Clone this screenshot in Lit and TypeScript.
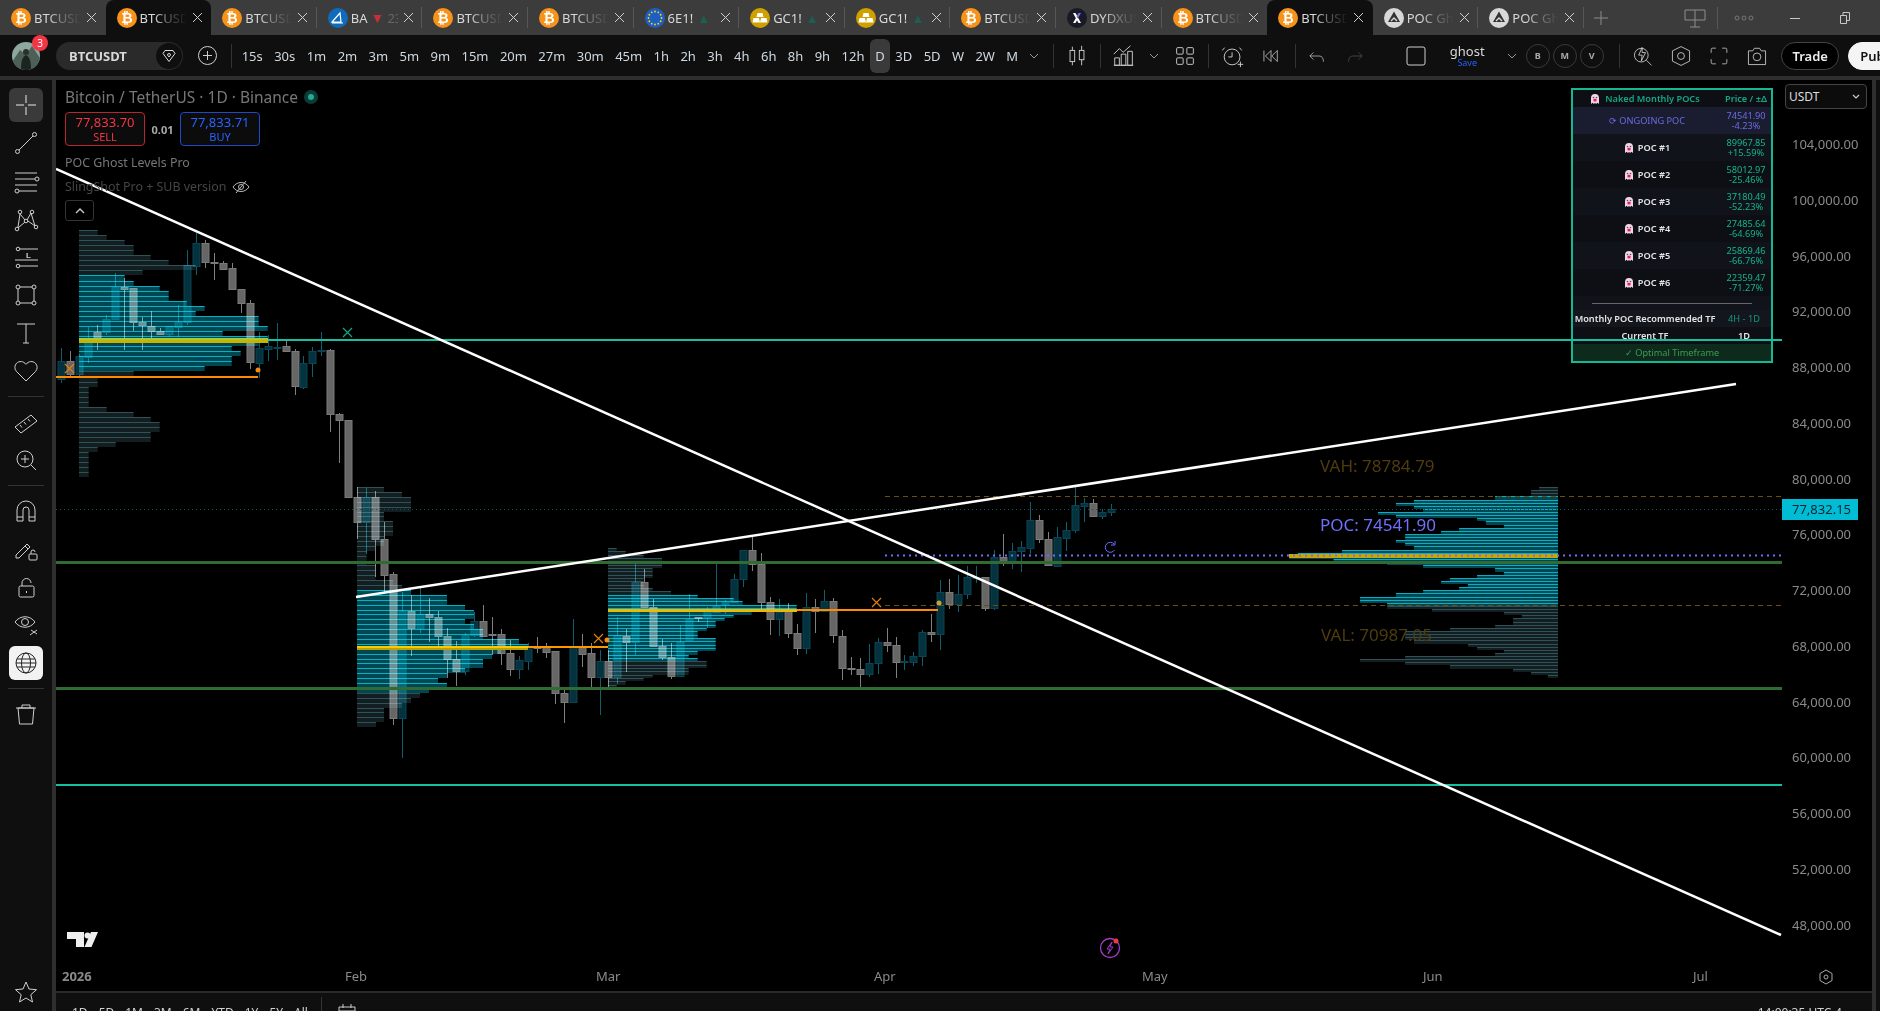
import { LitElement, html, svg, css } from 'lit'
import { customElement } from 'lit/decorators.js'

// body top, body bottom, wick top, wick bottom, up (1) / down (0)
const CANDLES: number[][] = [
  [361,379,348,383,1],[361,374,351,377,0],[356,374,354,376,1],[340,357,327,363,1],[332,341,325,350,0],
  [319,332,315,335,1],[287,319,273,320,1],[287,289,278,350,0],[288,322,288,331,0],[322,325,317,350,0],
  [326,331,311,343,0],[331,334,328,335,0],[326,334,326,337,1],[322,327,305,337,1],[265,322,250,325,1],
  [243,266,233,275,1],[243,262,240,268,0],[262,263,253,280,0],[263,269,261,270,0],[268,289,263,290,0],
  [289,303,289,313,0],[303,362,300,369,0],[348,363,332,378,1],[346,349,335,361,1],[347,348,323,360,1],
  [346,351,341,352,0],[351,386,349,395,0],[363,387,356,389,1],[351,363,347,377,1],[350,351,332,356,1],
  [350,414,349,432,0],[414,420,413,463,0],[420,497,420,497,0],[497,522,487,539,0],[497,522,488,554,1],
  [497,539,491,577,0],[539,575,522,592,0],[574,718,572,725,0],[611,718,592,758,1],[611,628,595,656,0],
  [614,628,588,633,1],[614,617,598,642,0],[617,636,611,648,0],[636,659,628,678,0],[659,671,641,686,0],
  [635,671,633,675,1],[621,635,612,637,1],[621,636,605,636,0],[634,635,617,655,0],[634,653,629,665,0],
  [653,669,640,676,0],[660,669,656,679,1],[647,661,643,670,1],[647,648,637,653,0],[647,652,643,658,0],
  [651,693,651,704,0],[693,702,688,723,0],[647,702,619,703,1],[647,654,634,667,0],[653,677,643,689,0],
  [661,677,650,715,1],[661,677,650,687,0],[635,677,617,684,1],[636,642,629,672,0],[582,642,562,655,1],
  [582,607,569,608,0],[607,646,599,646,0],[646,657,639,660,0],[657,676,643,679,0],[642,676,625,677,1],
  [619,640,594,640,1],[617,618,617,622,0],[611,617,607,628,1],[606,612,563,612,1],[602,604,600,614,1],
  [579,602,574,603,1],[550,579,550,587,1],[550,564,537,571,0],[564,602,553,609,0],[602,619,597,635,0],
  [612,619,599,636,1],[611,633,603,638,0],[633,648,624,655,0],[607,648,593,654,1],[607,611,599,633,0],
  [601,611,590,612,1],[601,635,598,643,0],[636,668,630,680,0],[668,669,657,675,0],[669,674,658,687,0],
  [663,674,644,677,1],[642,663,638,674,1],[642,645,628,652,0],[645,662,637,678,0],[661,662,655,670,1],
  [656,662,652,666,1],[632,656,630,666,1],[632,634,614,642,0],[592,634,580,650,1],[592,604,579,609,0],
  [594,604,575,612,1],[577,594,566,599,1],[577,578,566,583,1],[577,608,577,611,0],[557,608,550,610,1],
  [557,562,534,566,0],[551,561,543,569,1],[547,551,541,572,1],[520,548,502,554,1],[520,539,515,543,0],
  [539,565,532,566,0],[537,566,527,567,1],[530,538,522,551,1],[505,530,487,533,1],[503,506,498,522,1],
  [503,516,499,517,0],[512,516,509,519,1],[509,512,504,516,1],
]

// profile bar ends, read row by row from the top
const JAN = [113,140,194,221,221,272,326,407,248,194,221,299,326,326,380,434,407,596,596,623,488,623,596,515,542,515,515,434,221,113,113,86,86,86,86,140,221,272,299,299,272,272,167,113,86,86,86,86,86]
const FEB = [132,186,213,213,213,132,132,159,159,159,132,132,105,80,80,80,107,107,107,159,186,213,321,321,375,402,402,375,402,429,429,537,564,483,456,429,429,375,321,294,321,267,240,213,186,132,132,132,108]
const MAR = [830,857,911,966,966,966,938,938,938,911,911,911,938,993,1073,1181,1208,1370,1370,1235,1181,1154,1127,1127,1100,1073,1073,1127,1127,1127,1127,1073,1046,1073,1100,1100,1046,1046,938,911,857,830]
const NOW = [677,656,656,562,350,303,350,374,256,303,515,538,585,468,421,327,327,303,327,350,162,47,24,140,280,374,562,585,515,444,421,491,468,374,303,209,209,280,280,397,585,632,609,609,562,444,327,327,327,350,491,515,585,562,327,209,327,444,609,656,700]

const priceY = (p: number) => 144 + ((104000 - p) / 4000) * 55.75

const TABS = [
  { kind: 'btc', name: 'BTCUSD' }, { kind: 'btc', name: 'BTCUSD', active: true }, { kind: 'btc', name: 'BTCUSD' },
  { kind: 'ba', name: 'BA', down: '23' }, { kind: 'btc', name: 'BTCUSD' }, { kind: 'btc', name: 'BTCUSD' },
  { kind: 'eu', name: '6E1!', up: true }, { kind: 'gold', name: 'GC1!', up: true }, { kind: 'gold', name: 'GC1!', up: true },
  { kind: 'btc', name: 'BTCUSD' }, { kind: 'dydx', name: 'DYDXUSD' }, { kind: 'btc', name: 'BTCUSD' },
  { kind: 'btc', name: 'BTCUSD', active: true }, { kind: 'poc', name: 'POC Ghost' }, { kind: 'poc', name: 'POC Ghost' },
]

const FRAMES = ['15s','30s','1m','2m','3m','5m','9m','15m','20m','27m','30m','45m','1h','2h','3h','4h','6h','8h','9h','12h','D','3D','5D','W','2W','M']

const POCS = [
  ['POC #1', '89967.85', '+15.59%'], ['POC #2', '58012.97', '-25.46%'], ['POC #3', '37180.49', '-52.23%'],
  ['POC #4', '27485.64', '-64.69%'], ['POC #5', '25869.46', '-66.76%'], ['POC #6', '22359.47', '-71.27%'],
]

const tabIcon = (kind: string) => {
  if (kind === 'btc') return svg`<circle cx="10" cy="10" r="10" fill="#f7931a"/><text x="10" y="15" text-anchor="middle" font-size="14" font-weight="700" fill="#fff" font-family="Liberation Sans">₿</text>`
  if (kind === 'ba') return svg`<circle cx="10" cy="10" r="10" fill="#0f6cbd"/><path d="M4 14 12 5l1 9zM4 15h11" fill="none" stroke="#fff" stroke-width="1.2"/>`
  if (kind === 'eu') return svg`<circle cx="10" cy="10" r="10" fill="#1c5fc0"/><g fill="#ffd21e">${[0,1,2,3,4,5,6,7,8,9,10,11].map(i => svg`<circle cx=${10 + 6.5 * Math.cos(i * 0.5236)} cy=${10 + 6.5 * Math.sin(i * 0.5236)} r="0.9"/>`)}</g>`
  if (kind === 'gold') return svg`<circle cx="10" cy="10" r="10" fill="#d09f00"/><path d="M7.5 5h5l1 4h-7zM3.5 10h5.5l1 4.5H2.500zM11 10h5.500l1 4.500H10z" fill="#fff"/>`
  if (kind === 'dydx') return svg`<circle cx="10" cy="10" r="10" fill="#1a1a26"/><path d="M6 5h2.500l5.500 10h-2.500z" fill="#fff"/><path d="M14 5h-2.500l-2 3.500 1.200 2z" fill="#7a6cf0"/><path d="M6 15h2.500l2-3.500-1.200-2z" fill="#fff"/>`
  return svg`<circle cx="10" cy="10" r="10" fill="#d8d8d8"/><path d="M10 3.500 16 14H4zM7 14l3-3 3 3" fill="#333"/><path d="m7 13 3-3 3 3" fill="none" stroke="#d8d8d8" stroke-width="1.400"/>`
}

const ghost = () => html`<svg class="ghost" viewBox="0 0 10 12"><path d="M1 11V5a4 4 0 0 1 8 0v6L7.500 9.800 6 11 5 9.800 4 11 2.500 9.800z" fill="#f2d6e6"/><circle cx="3.500" cy="4.500" r=".8" fill="#555"/><circle cx="6.500" cy="4.500" r=".8" fill="#555"/><rect x="3.500" y="5.800" width="3" height="2.600" fill="#e8186e"/></svg>`

const ic = (body: unknown, size = 28) => html`<svg width=${size} height=${size} viewBox="0 0 28 28" fill="none" stroke="currentColor" stroke-width="1">${body}</svg>`

const chevron = (cls = '') => html`<span class="chev ${cls}"><svg width="10" height="6" viewBox="0 0 10 6" fill="none" stroke="currentColor"><path d="m1 1 4 4 4-4"/></svg></span>`

const SIDE_A = [
  svg`<path d="M14 4v8M14 16v8M4 14h8M16 14h8"/>`,
  svg`<circle cx="5.500" cy="22.500" r="2"/><circle cx="22.500" cy="5.500" r="2"/><path d="M7 21 21 7"/>`,
  svg`<path d="M3 6h22M3 12h20M3 18h22M7 24h18"/><circle cx="25" cy="12" r="2"/><circle cx="5" cy="24" r="2"/>`,
  svg`<circle cx="5" cy="24" r="1.800"/><circle cx="8" cy="7" r="1.800"/><circle cx="14" cy="16" r="1.800"/><circle cx="20" cy="7" r="1.800"/><circle cx="24" cy="22" r="1.800"/><path d="m6 22 2-13 5 6M15 15l4-7 4 13M6 23l7-6M16 16l7 5"/>`,
  svg`<circle cx="6" cy="6" r="1.800"/><circle cx="6" cy="23" r="1.800"/><path d="M8 6h18M3 17h23M8 23h18"/><text x="14" y="15" font-size="8" fill="currentColor" stroke="none" font-family="Liberation Sans" font-weight="700">L</text>`,
  svg`<rect x="6" y="6" width="16" height="16"/><circle cx="6" cy="6" r="2" fill="#0f0f0f"/><circle cx="22" cy="6" r="2" fill="#0f0f0f"/><circle cx="6" cy="22" r="2" fill="#0f0f0f"/><circle cx="22" cy="22" r="2" fill="#0f0f0f"/>`,
  svg`<path d="M5 5h18M14 5v19M11 24h6"/>`,
  svg`<path d="M14 24 4.500 14.500a6 6 0 0 1 0-8.200c2.700-2.600 7-2.300 9.500 1 2.500-3.300 6.800-3.600 9.500-1a6 6 0 0 1 0 8.200z"/>`,
]
const SIDE_B = [
  svg`<path d="m3 19 16-12 6 6-16 12zM8 17l2 2.500M12 14l2 2.500M16 11l2 2.500"/>`,
  svg`<circle cx="13" cy="13" r="8"/><path d="M13 9v8M9 13h8M19 19l5 5"/>`,
]
const SIDE_C = [
  svg`<path d="M5 24V13a9 9 0 0 1 18 0v11h-6V13a3 3 0 0 0-6 0v11zM5 20h6M17 20h6"/>`,
  svg`<path d="m4 20 11-11 3 3-11 11H4zM13 11l3 3"/><rect x="17" y="19" width="8" height="6" rx="1"/><path d="M19 19v-2a2 2 0 0 1 4 0"/>`,
  svg`<rect x="7" y="13" width="15" height="11" rx="1.500"/><path d="M10 13v-3a4.500 4.500 0 0 1 9 0M14.500 18v2"/>`,
  svg`<path d="M3 11c5-7 15-7 20 0-5 7-15 7-20 0z"/><circle cx="13" cy="11" r="3.500"/><path d="m18 24 7-5M19 19l6 4"/>`,
]

@customElement('app-root')
export class AppRoot extends LitElement {
  static styles = css`
    :host {
      display: block;
      width: 1880px;
      height: 1011px;
      overflow: hidden;
      background: #2e2e2e;
      color: #d6d6d6;
      font-family: 'Noto Sans', 'Liberation Sans', sans-serif;
    }

    .tabs {
      display: flex;
      height: 35px;
      background: #3c3c3c;
      align-items: stretch;
    }
    .tab {
      flex: 0 0 105.6px;
      box-sizing: border-box;
      display: flex;
      align-items: center;
      padding-left: 11px;
      position: relative;
      font-size: 13px;
      color: #d8d8d8;
    }
    .tab.active {
      background: #0f0f0f;
      border-radius: 8px 8px 0 0;
    }
    .tab.sep::after {
      content: '';
      position: absolute;
      right: 0;
      top: 7px;
      bottom: 7px;
      width: 1px;
      background: #575757;
    }
    .tab .fav {
      flex: none;
      width: 20px;
      height: 20px;
      margin-right: 3px;
    }
    .tab .name {
      width: 47px;
      white-space: nowrap;
      overflow: hidden;
      -webkit-mask-image: linear-gradient(90deg, #000 28%, rgba(0, 0, 0, 0.4) 62%, transparent);
    }
    .tab .plain {
      -webkit-mask-image: none;
    }
    .tab .close {
      position: absolute;
      left: 86px;
      top: 12px;
      color: #d0d0d0;
    }
    .dn { color: #c2303a; font-size: 14px; margin: 0 3px; }
    .dim { color: #666; }
    .upm { color: #1f5e52; font-size: 13px; margin-left: 4px; }
    .newtab {
      margin-left: 6px;
      width: 22px;
      display: flex;
      align-items: center;
      justify-content: center;
      color: #8a8a8a;
    }
    .winctl {
      margin-left: auto;
      display: flex;
      align-items: center;
      color: #c8c8c8;
    }
    .winctl .mon { margin-right: 11px; color: #8d8d8d; }
    .winctl .vr { width: 1px; height: 22px; background: #575757; margin-right: 16px; }
    .winctl .dots { width: 20px; margin-right: 36px; color: #777; }
    .winctl .btn { margin-right: 40px; }
    .winctl .btn:last-child { margin-right: 30px; }

    .toolbar {
      display: flex;
      align-items: center;
      height: 41px;
      background: #0f0f0f;
      margin-bottom: 4px;
      padding-left: 12px;
      font-size: 13px;
      white-space: nowrap;
      overflow: hidden;
    }
    .avatar {
      position: relative;
      flex: none;
      width: 28px;
      height: 28px;
      margin-right: 16px;
    }
    .avatar .pic {
      width: 28px;
      height: 28px;
      border-radius: 50%;
      overflow: hidden;
      display: block;
    }
    .badge {
      position: absolute;
      top: -7px;
      right: -8px;
      width: 16px;
      height: 16px;
      border-radius: 50%;
      background: #f23645;
      color: #fff;
      font-size: 10px;
      line-height: 16px;
      text-align: center;
    }
    .symbol {
      flex: none;
      box-sizing: border-box;
      width: 127px;
      height: 28px;
      border-radius: 14px;
      background: #2a2a2a;
      display: flex;
      align-items: center;
      justify-content: space-between;
      padding: 0 1px 0 13px;
      font-weight: 700;
      font-size: 13px;
      color: #d8d8d8;
    }
    .symbol .tag {
      width: 26px;
      height: 26px;
      border-radius: 50%;
      background: #0f0f0f;
      display: flex;
      align-items: center;
      justify-content: center;
    }
    .addsym {
      flex: none;
      width: 48px;
      display: flex;
      justify-content: center;
      color: #d0d0d0;
    }
    .vr {
      flex: none;
      width: 1px;
      height: 24px;
      background: #333;
    }
    .frames {
      display: flex;
      align-items: center;
      margin-left: 4px;
    }
    .frame {
      padding: 0 5.700px;
      height: 34px;
      line-height: 34px;
      border-radius: 6px;
      color: #cfd8e0;
    }
    .frame.on {
      background: #3a3a3a;
      padding: 0 5px;
    }
    .tool {
      flex: none;
      width: 38px;
      height: 34px;
      display: flex;
      align-items: center;
      justify-content: center;
      color: #cfcfcf;
    }
    .tool.narrow { width: 36px; }
    .tool.off { color: #555; }
    .chev {
      flex: none;
      width: 20px;
      display: flex;
      justify-content: center;
      color: #999;
    }
    .chev.wide { width: 25px; }
    .vr.m { margin: 0 5px; }
    .vr.first { margin: 0 5px 0 9px; }
    .vr.tight { margin: 0 2.400px 0 5px; }
    .vr.after-rounds { margin: 0 4px 0 14px; }
    .square { margin-left: 23px; }
    .layout {
      flex: none;
      width: 60px;
      margin: 0 5px 0 2px;
      text-align: center;
      line-height: 13px;
      font-size: 13px;
      color: #d8d8d8;
    }
    .layout small {
      display: block;
      font-size: 9px;
      line-height: 9px;
      color: #2962ff;
    }
    .rounds {
      flex: none;
      display: flex;
      margin-left: 2px;
    }
    .round {
      flex: none;
      width: 24px;
      height: 24px;
      border: 1px solid #3a3a3a;
      border-radius: 50%;
      box-sizing: border-box;
      margin: 0 1.500px;
      text-align: center;
      line-height: 22px;
      font-size: 9px;
      font-weight: 700;
      color: #aaa;
    }
    .pill {
      flex: none;
      box-sizing: border-box;
      height: 28px;
      border-radius: 14px;
      line-height: 26px;
      text-align: center;
      font-size: 13px;
      font-weight: 600;
    }
    .pill.trade {
      width: 58px;
      margin: 0 9px 0 5px;
      background: #000;
      border: 1px solid #444;
      color: #eee;
    }
    .pill.pub {
      width: 70px;
      background: #f4f4f4;
      color: #111;
      border: 1px solid #f4f4f4;
      text-align: left;
      padding-left: 11px;
    }

    .main {
      display: flex;
      height: 931px;
    }
    .side {
      flex: none;
      box-sizing: border-box;
      width: 52px;
      margin-right: 4px;
      background: #0f0f0f;
      display: flex;
      flex-direction: column;
      align-items: center;
      padding: 8px 0 2px;
      gap: 4px;
      color: #cfcfcf;
    }
    .side .it {
      width: 34px;
      height: 34px;
      display: flex;
      align-items: center;
      justify-content: center;
      border-radius: 6px;
    }
    .side .it.sel { background: #3a3a3a; color: #e8e8e8; }
    .side .it.globe { background: #f2f2f2; color: #222; }
    .side .rule {
      width: 36px;
      height: 1px;
      background: #333;
      margin: 4px 0;
    }
    .side .star { margin-top: auto; }

    .col {
      flex: none;
      width: 1816px;
      margin-right: 4px;
      display: flex;
      flex-direction: column;
    }
    .chart {
      position: relative;
      height: 913px;
      background: #000;
      border-bottom: 2px solid #2a2a2a;
      box-sizing: border-box;
      flex: none;
      overflow: hidden;
    }
    .chart > svg {
      position: absolute;
      left: 0;
      top: 0;
    }
    .candles { mix-blend-mode: screen; }
    .ax { font-family: 'Noto Sans', sans-serif; font-size: 13px; fill: #8a8a8a; }
    .ax.b { font-weight: 700; }
    .big { font-family: 'Noto Sans', sans-serif; font-size: 17px; }

    .legend {
      position: absolute;
      left: 9px;
      top: 8px;
      display: flex;
      flex-direction: column;
      align-items: flex-start;
      color: #777;
      z-index: 2;
    }
    .title {
      display: flex;
      align-items: center;
      gap: 10px;
      font-size: 15.500px;
      line-height: 18px;
      height: 18px;
    }
    .status {
      width: 6px;
      height: 6px;
      border-radius: 50%;
      background: #22ab94;
      box-shadow: 0 0 0 4px #0d3a33;
    }
    .quotes {
      display: flex;
      align-items: center;
      margin-top: 6px;
    }
    .q {
      box-sizing: border-box;
      width: 80px;
      height: 34px;
      border: 1px solid;
      border-radius: 4px;
      background: #0c0c0c;
      text-align: center;
      font-size: 13px;
      line-height: 16px;
      padding-top: 1px;
    }
    .q small { display: block; font-size: 11px; line-height: 13px; }
    .q.sell { border-color: #b9242f; color: #f23645; }
    .q.buy { border-color: #2048c8; color: #2962ff; }
    .spread {
      width: 35px;
      text-align: center;
      font-size: 11px;
      font-weight: 700;
      color: #aaa;
    }
    .study {
      margin-top: 8px;
      font-size: 12.400px;
      line-height: 18px;
    }
    .study.off {
      margin-top: 6px;
      color: #454545;
      display: flex;
      align-items: center;
      gap: 6px;
    }
    .collapse {
      margin-top: 4px;
      box-sizing: border-box;
      width: 29px;
      height: 21px;
      border: 1px solid #333;
      border-radius: 3px;
      display: flex;
      align-items: center;
      justify-content: center;
      color: #ccc;
    }

    .panel {
      position: absolute;
      left: 1515px;
      top: 8px;
      box-sizing: border-box;
      width: 202px;
      height: 275px;
      border: 2px solid #14b892;
      background: #0d0f14;
      font-size: 9.200px;
      line-height: 10px;
      color: #e4e4e4;
    }
    .panel .r {
      display: grid;
      grid-template-columns: 1fr 50px;
      align-items: center;
      text-align: center;
    }
    .panel .hd { height: 17px; color: #14a585; font-weight: 600; }
    .panel .on { height: 27px; background: #1a1c30; color: #6a6ce0; }
    .panel .poc { height: 27px; font-weight: 600; }
    .panel .poc:nth-child(odd) { background: #10131a; }
    .panel .num { font-weight: 400; color: #12b58c; }
    .panel .on .num { color: #6a6ce0; }
    .panel .poc .lab {
      display: flex;
      align-items: center;
      justify-content: center;
      gap: 4px;
    }
    .panel .hd .lab {
      display: flex;
      align-items: center;
      justify-content: center;
      gap: 5px;
      padding-right: 4px;
    }
    .ghost { width: 10px; height: 12px; flex: none; }
    .panel .dash {
      height: 14px;
      display: flex;
      align-items: center;
      justify-content: center;
      background: #10131a;
    }
    .panel .dash i {
      display: block;
      width: 160px;
      height: 1px;
      background: #666;
    }
    .panel .wide {
      height: 17px;
      display: grid;
      grid-template-columns: 1fr 54px;
      align-items: center;
      text-align: center;
      font-weight: 600;
      white-space: nowrap;
    }
    .panel .wide.alt { background: #14161d; }
    .panel .wide .num { color: #0f9a7c; }
    .panel .wide .cur { color: #e4e4e4; }
    .panel .ok {
      height: 17px;
      line-height: 17px;
      text-align: center;
      background: #0e2a1c;
      color: #3e9d4f;
    }

    .usdt {
      position: absolute;
      left: 1729px;
      top: 4px;
      box-sizing: border-box;
      width: 82px;
      height: 25px;
      border: 1px solid #444;
      border-radius: 4px;
      background: #0c0c0c;
      display: flex;
      align-items: center;
      justify-content: space-between;
      padding: 0 6px 0 3px;
      font-size: 12px;
      color: #ddd;
      z-index: 2;
    }

    .range {
      flex: none;
      height: 18px;
      background: #0f0f0f;
      display: flex;
      align-items: flex-start;
      padding: 12px 0 0 16px;
      box-sizing: border-box;
      font-size: 12px;
      line-height: 16px;
      color: #d0d0d0;
      overflow: hidden;
      white-space: nowrap;
      gap: 11px;
    }
    .range .vr { height: 16px; margin-left: 2px; margin-top: -8px; }
    .range .cal { margin: -2px 0 0 5px; color: #ccc; flex: none; }
    .range .clock { margin-left: auto; margin-right: 30px; }
    .gutter-end {
      flex: none;
      width: 4px;
      background: #0f0f0f;
    }
  `

  private renderTab(t: any, i: number) {
    const next = TABS[i + 1] as any
    const sep = !t.active && !(next && next.active)
    return html`
      <div class="tab ${t.active ? 'active' : ''} ${sep ? 'sep' : ''}">
        <svg class="fav" viewBox="0 0 20 20">${tabIcon(t.kind)}</svg>
        ${t.down
          ? html`<span class="name plain">BA<span class="dn">▼</span><span class="dim">${t.down}</span></span>`
          : t.up
            ? html`<span class="name plain">${t.name}<span class="upm">▲</span></span>`
            : html`<span class="name">${t.name}</span>`}
        <svg class="close" width="11" height="11" viewBox="0 0 11 11" stroke="currentColor"><path d="m1 1 9 9M10 1l-9 9"/></svg>
      </div>
    `
  }

  private renderCandles() {
    return CANDLES.map((c, i) => {
      const x = Math.round(61.3 + 8.97 * i)
      const [bt, bb, wt, wb, up] = c
      return svg`
        <line x1=${x + 0.5} x2=${x + 0.5} y1=${wt} y2=${wb} stroke=${up ? '#0b5f6e' : '#808080'}/>
        <rect x=${x - 3} y=${bt + 0.5} width="7" height=${Math.max(bb - bt, 1)} fill=${up ? '#04323e' : '#666'} stroke=${up ? '#0a4452' : '#7a7a7a'}/>
      `
    })
  }

  // one volume profile: rows run from x1 to x2, inside the value area they are bright
  private renderProfile(rows: number[][], top: number, h: number, va0: number, va1: number) {
    return rows.map(([x1, x2], i) => {
      const y = Math.round(top + i * h)
      const on = i >= va0 && i <= va1
      const nextY = Math.round(top + (i + 1) * h)
      return svg`
        <rect x=${x1} y=${y} width=${x2 - x1} height=${nextY - y} fill=${on ? '#00a9c4' : '#6fb4c4'} opacity=${on ? 0.42 : 0.17}/>
        <line x1=${x1} x2=${x2} y1=${y + 0.5} y2=${y + 0.5} stroke=${on ? '#00c4dc' : '#6fb8c8'} opacity=${on ? 0.85 : 0.33}/>
      `
    })
  }

  private renderChart() {
    const prices: number[] = []
    for (let p = 104000; p >= 48000; p -= 4000) prices.push(p)
    const jan = JAN.map(z => [79, 60 + z / 3])
    const feb = FEB.map(z => [357, 340 + z / 3])
    const mar = MAR.map(z => [608, 340 + z / 3])
    const cur = NOW.map(z => [1280 + z / 2.613, 1558])
    return html`
      <svg width="1816" height="913" viewBox="56 80 1816 913" xmlns="http://www.w3.org/2000/svg">
        ${this.renderProfile(jan, 230, 5.05, 9, 27)}
        ${this.renderProfile(feb, 487, 4.9, 21, 41)}
        ${this.renderProfile(mar, 548, 3.33, 14, 33)}
        ${this.renderProfile(cur, 487, 3.13, 3, 37)}

        <g class="candles">${this.renderCandles()}</g>

        <line x1="56" x2="1782" y1="509.5" y2="509.5" stroke="#0e5560" stroke-dasharray="1 3"/>
        <line x1="885" x2="1782" y1="496.5" y2="496.5" stroke="#6b4f10" stroke-dasharray="5 4"/>
        <line x1="885" x2="1782" y1="605.5" y2="605.5" stroke="#6b4f10" stroke-dasharray="5 4"/>

        <rect x="56" y="561" width="1726" height="3" fill="#2f6b33"/>
        <rect x="56" y="687" width="1726" height="3" fill="#2f6b33"/>
        <rect x="268" y="339" width="1514" height="2" fill="#14c0a0"/>
        <rect x="56" y="784" width="1726" height="2" fill="#14c0a0"/>

        <rect x="79" y="338" width="189" height="2" fill="#a8c838"/>
        <rect x="79" y="340" width="189" height="3" fill="#c8b400"/>
        <rect x="357" y="646" width="171" height="2" fill="#ffc800"/>
        <rect x="357" y="648" width="171" height="2" fill="#b8a400"/>
        <rect x="608" y="609" width="189" height="3" fill="#f0b800"/>
        <rect x="1289" y="554" width="269" height="4" fill="#c8a800"/>

        <rect x="56" y="376" width="202" height="2" fill="#ff8c00"/>
        <rect x="528" y="646" width="80" height="2" fill="#ff9800"/>
        <rect x="797" y="609" width="141" height="2" fill="#ff8c00"/>
        <circle cx="258" cy="370" r="2.500" fill="#f08a10"/>
        <circle cx="607" cy="640" r="2.500" fill="#ff8c00"/>
        <circle cx="939" cy="603" r="2.500" fill="#c8a040"/>
        <path d="M65 364l9 9M74 364l-9 9M594 634l9 9M603 634l-9 9M872 598l9 9M881 598l-9 9" stroke="#e07f10" stroke-width="1.200"/>
        <path d="M343 328l9 9M352 328l-9 9" stroke="#14a588" stroke-width="1.200"/>

        <line x1="885" x2="1782" y1="555.5" y2="555.5" stroke="#6c6cff" stroke-width="2" stroke-dasharray="2 4"/>

        <line x1="56" y1="169" x2="1781" y2="935" stroke="#fff" stroke-width="2.500"/>
        <line x1="356" y1="597" x2="1736" y2="384" stroke="#fff" stroke-width="2.500"/>

        <path d="M1114 544a5 5 0 1 0 .500 6M1115 541v4h-4" fill="none" stroke="#6c6cff"/>

        <text class="big" x="1320" y="472" fill="#4f3c0e">VAH: 78784.79</text>
        <text class="big" x="1320" y="531" fill="#7070ff">POC: 74541.90</text>
        <text class="big" x="1321" y="641" fill="#4f3c0e">VAL: 70987.05</text>

        ${prices.map(p => svg`<text class="ax" x="1792" y=${priceY(p) + 5}>${p.toLocaleString('en-US')}.00</text>`)}
        <rect x="1782" y="499" width="76" height="21" fill="#00bcd4"/>
        <text class="ax" x="1792" y="514" style="fill:#06242a">77,832.15</text>

        <text class="ax b" x="62" y="981">2026</text>
        <text class="ax" x="345" y="981">Feb</text>
        <text class="ax" x="596" y="981">Mar</text>
        <text class="ax" x="874" y="981">Apr</text>
        <text class="ax" x="1142" y="981">May</text>
        <text class="ax" x="1423" y="981">Jun</text>
        <text class="ax" x="1693" y="981">Jul</text>
        <path d="M1826 970l6 3.500v7l-6 3.500-6-3.500v-7z" fill="none" stroke="#aaa"/>
        <circle cx="1826" cy="977" r="2" fill="none" stroke="#aaa"/>

        <path d="M67 932h17v15h-8v-8h-9zM91 932h7l-6.500 15h-7z" fill="#eee"/>
        <circle cx="87.500" cy="935.500" r="3" fill="#eee"/>

        <circle cx="1110" cy="948" r="9.500" fill="none" stroke="#a33cc4" stroke-width="1.300"/>
        <path d="m1112 942-5 7h3l-2 5 5-7h-3z" fill="none" stroke="#a33cc4"/>
        <circle cx="1116" cy="941" r="2.500" fill="#f23645"/>
      </svg>
    `
  }

  render() {
    return html`
      <div class="tabs">
        ${TABS.map((t, i) => this.renderTab(t, i))}
        <div class="newtab">
          <svg width="14" height="14" viewBox="0 0 14 14" stroke="currentColor"><path d="M7 0v14M0 7h14"/></svg>
        </div>
        <div class="winctl">
          <svg class="mon" width="22" height="22" viewBox="0 0 22 22" fill="none" stroke="currentColor"><path d="M1 3h20v10H1zM11 3v10M11 13v7M6 20h10"/></svg>
          <span class="vr"></span>
          <svg class="dots" viewBox="0 0 20 6" height="6" fill="none" stroke="currentColor"><circle cx="3" cy="3" r="2"/><circle cx="10" cy="3" r="2"/><circle cx="17" cy="3" r="2"/></svg>
          <svg class="btn" width="10" height="10" viewBox="0 0 10 10" stroke="currentColor"><path d="M0 5.500h10"/></svg>
          <svg class="btn" width="10" height="12" viewBox="0 0 10 12" fill="none" stroke="currentColor"><path d="M.5 3.500h6v8h-6zM3 3.500V.5h6.500v8h-3"/></svg>
        </div>
      </div>

      <div class="toolbar">
        <div class="avatar">
          <svg class="pic" viewBox="0 0 28 28"><rect width="28" height="28" fill="#8ea8a0"/><path d="M0 20 8 8l6 5 6-9 8 12v12H0z" fill="#4c6058"/><path d="M9 28c0-8 1-13 5-15 4 2 5 7 5 15z" fill="#1c2422"/><circle cx="14" cy="10" r="3" fill="#2c302c"/></svg>
          <span class="badge">3</span>
        </div>
        <div class="symbol">
          <span>BTCUSDT</span>
          <span class="tag">
            <svg width="14" height="14" viewBox="0 0 14 14" fill="none" stroke="#ddd"><path d="M3 1.500h8l2 3-6 8-6-8zM7 4.500a1.500 1.500 0 0 1 1.500 1.500L7 8 5.500 6A1.500 1.500 0 0 1 7 4.500"/></svg>
          </span>
        </div>
        <div class="addsym">
          <svg width="19" height="19" viewBox="0 0 19 19" fill="none" stroke="currentColor"><circle cx="9.500" cy="9.500" r="9"/><path d="M9.500 5v9M5 9.500h9"/></svg>
        </div>
        <span class="vr"></span>
        <div class="frames">
          ${FRAMES.map(f => html`<span class="frame ${f === 'D' ? 'on' : ''}">${f}</span>`)}
        </div>
        ${chevron()}
        <span class="vr first"></span>
        <span class="tool narrow">${ic(svg`<path d="M9 4v4M9 20v4M19 3v5M19 18v6"/><rect x="6.500" y="8" width="5" height="12"/><rect x="16.500" y="8" width="5" height="10"/>`, 26)}</span>
        <span class="vr m"></span>
        <span class="tool narrow">${ic(svg`<path d="M4 24V16h5v8zM11 24V12h5v12zM18 24V9h5v15zM3 24h21M3 12l6-6 4 4 8-7"/>`, 26)}</span>
        ${chevron('wide')}
        <span class="tool narrow">${ic(svg`<rect x="5" y="5" width="7" height="7" rx="1"/><rect x="16" y="5" width="7" height="7" rx="1"/><rect x="5" y="16" width="7" height="7" rx="1"/><rect x="16" y="16" width="7" height="7" rx="1"/>`, 26)}</span>
        <span class="vr m"></span>
        <span class="tool">${ic(svg`<circle cx="13" cy="15" r="8.500"/><path d="M13 10v5h-4M5 5 2.500 8M21 5l2.500 3M22 20v6M19 23h6"/>`, 26)}</span>
        <span class="tool">${ic(svg`<path d="M14 7 7 14l7 7zM22 7l-7 7 7 7zM5 7v14"/>`, 22)}</span>
        <span class="vr tight"></span>
        <span class="tool">${ic(svg`<path d="M9 9 4 14l5 5M4 14h13c4 0 6 3 6 8"/>`, 20)}</span>
        <span class="tool off">${ic(svg`<path d="m19 9 5 5-5 5M24 14H11c-4 0-6 3-6 8"/>`, 20)}</span>
        <span class="tool square">
          <svg width="20" height="20" viewBox="0 0 20 20" fill="none" stroke="currentColor"><rect x="1" y="1" width="18" height="18" rx="2"/></svg>
        </span>
        <div class="layout">ghost<small>Save</small></div>
        ${chevron()}
        <div class="rounds"><span class="round">B</span><span class="round">M</span><span class="round">V</span></div>
        <span class="vr after-rounds"></span>
        <span class="tool">${ic(svg`<circle cx="12" cy="13" r="8"/><path d="m18 19 6 6M13 4l-4 9h4l-1 7 5-10h-4z"/>`, 24)}</span>
        <span class="tool">${ic(svg`<path d="M14 3 24 8v12l-10 5-10-5V8z"/><circle cx="14" cy="14" r="4"/>`, 24)}</span>
        <span class="tool">${ic(svg`<path d="M4 10V6a2 2 0 0 1 2-2h4M18 4h4a2 2 0 0 1 2 2v4M24 18v4a2 2 0 0 1-2 2h-4M10 24H6a2 2 0 0 1-2-2v-4"/>`, 22)}</span>
        <span class="tool">${ic(svg`<path d="M4 8h5l2-3h6l2 3h5v16H4z"/><circle cx="14" cy="15" r="4.500"/>`, 24)}</span>
        <span class="pill trade">Trade</span>
        <span class="pill pub">Publish</span>
      </div>

      <div class="main">
        <div class="side">
          ${SIDE_A.map((b, i) => html`<span class="it ${i === 0 ? 'sel' : ''}">${ic(b)}</span>`)}
          <span class="rule"></span>
          ${SIDE_B.map(b => html`<span class="it">${ic(b)}</span>`)}
          <span class="rule"></span>
          ${SIDE_C.map(b => html`<span class="it">${ic(b)}</span>`)}
          <span class="it globe">${ic(svg`<circle cx="14" cy="14" r="10"/><ellipse cx="14" cy="14" rx="4.500" ry="10"/><path d="M5 10h18M5 18h18M4 14h20"/>`)}</span>
          <span class="rule"></span>
          <span class="it">${ic(svg`<path d="M6 8h16l-1.500 16h-13zM4 8h20M10 8V5h8v3"/>`)}</span>
          <span class="it star">${ic(svg`<path d="m14 4 3 7 7.500.700-5.700 5 1.700 7.300L14 20l-6.500 4 1.700-7.300-5.700-5L11 11z"/>`)}</span>
        </div>

        <div class="col">
          <div class="chart">
            <div class="panel">
              <div class="r hd">
                <span class="lab">${ghost()}Naked Monthly POCs</span>
                <span>Price / ±Δ</span>
              </div>
              <div class="r on">
                <span>⟳ ONGOING POC</span>
                <span class="num">74541.90<br />-4.23%</span>
              </div>
              ${POCS.map(p => html`
                <div class="r poc">
                  <span class="lab">${ghost()}${p[0]}</span>
                  <span class="num">${p[1]}<br />${p[2]}</span>
                </div>
              `)}
              <div class="dash"><i></i></div>
              <div class="wide alt"><span>Monthly POC Recommended TF</span><span class="num">4H - 1D</span></div>
              <div class="wide"><span>Current TF</span><span class="cur">1D</span></div>
              <div class="ok">✓ Optimal Timeframe</div>
            </div>

            ${this.renderChart()}

            <div class="legend">
              <div class="title">Bitcoin / TetherUS · 1D · Binance <span class="status"></span></div>
              <div class="quotes">
                <div class="q sell">77,833.70<small>SELL</small></div>
                <span class="spread">0.01</span>
                <div class="q buy">77,833.71<small>BUY</small></div>
              </div>
              <div class="study">POC Ghost Levels Pro</div>
              <div class="study off">
                SlingShot Pro + SUB version
                <svg width="18" height="14" viewBox="0 0 18 14" fill="none" stroke="#bbb"><path d="M1 7c4-6 12-6 16 0-4 6-12 6-16 0zM4 13 14 1"/><circle cx="9" cy="7" r="2.500"/></svg>
              </div>
              <div class="collapse">
                <svg width="10" height="6" viewBox="0 0 10 6" fill="none" stroke="currentColor" stroke-width="1.400"><path d="m1 5 4-4 4 4"/></svg>
              </div>
            </div>

            <div class="usdt">
              <span>USDT</span>
              <svg width="8" height="5" viewBox="0 0 8 5" fill="none" stroke="#ccc" stroke-width="1.200"><path d="m1 1 3 3 3-3"/></svg>
            </div>
          </div>
          <div class="range">
            <span>1D</span><span>5D</span><span>1M</span><span>3M</span><span>6M</span><span>YTD</span><span>1Y</span><span>5Y</span><span>All</span>
            <span class="vr"></span>
            <svg class="cal" width="18" height="18" viewBox="0 0 18 18" fill="none" stroke="currentColor"><path d="M1 4h16v13H1zM1 8h16M5 1v4M13 1v4"/></svg>
            <span class="clock">14:00:35 UTC-4</span>
          </div>
        </div>
        <div class="gutter-end"></div>
      </div>
    `
  }
}
